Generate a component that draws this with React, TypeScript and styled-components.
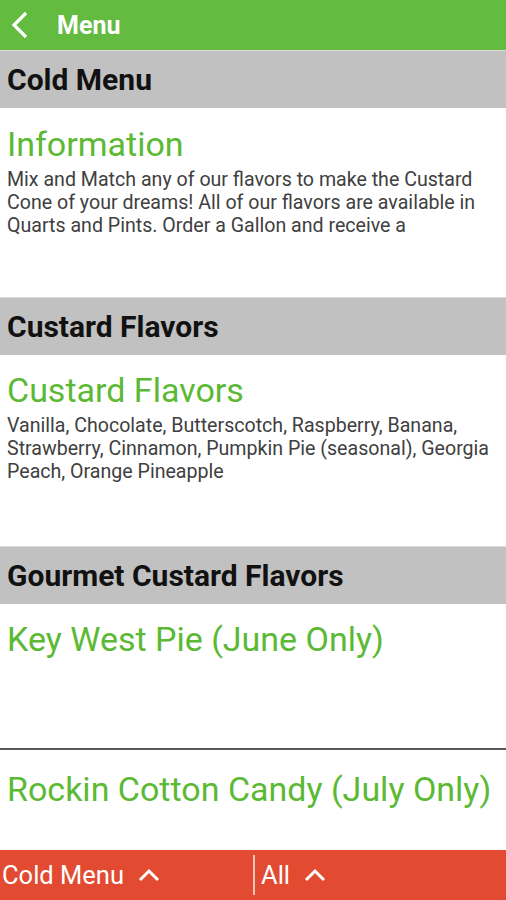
import styled, { createGlobalStyle } from "styled-components";

const GlobalStyle = createGlobalStyle`
  * { box-sizing: border-box; }
  body {
    margin: 0;
    font-family: Roboto, "Liberation Sans", sans-serif;
    background: #ffffff;
  }
`;

const Screen = styled.div`
  width: 506px;
  height: 900px;
  display: flex;
  flex-direction: column;
  overflow: hidden;
`;

const TopBar = styled.div`
  height: 50px;
  flex: 0 0 50px;
  background: #63bb40;
  display: flex;
  align-items: center;
  padding-left: 10px;
  gap: 27px;
`;

const TopTitle = styled.span`
  color: #ffffff;
  font-size: 25px;
  font-weight: 700;
`;

const CategoryHeader = styled.div`
  height: 58px;
  flex: 0 0 58px;
  background: #c1c1c1;
  border-top: 1px solid #dcdcdc;
  display: flex;
  align-items: center;
  padding-left: 7px;
  font-size: 30px;
  font-weight: 700;
  color: #111111;
`;

const Section = styled.div<{ $h: number; $pt?: number }>`
  height: ${(p) => p.$h}px;
  flex: 0 0 ${(p) => p.$h}px;
  padding: ${(p) => p.$pt ?? 17}px 6px 0 7px;
`;

const ItemTitle = styled.div`
  color: #5bb934;
  font-size: 34px;
  line-height: 38px;
`;

const ItemText = styled.div`
  margin-top: 5px;
  color: #404040;
  font-size: 19.6px;
  line-height: 23px;
`;

const Divider = styled.div`
  height: 2px;
  flex: 0 0 2px;
  background: #5a5a5a;
`;

const BottomBar = styled.div`
  margin-top: auto;
  height: 50px;
  flex: 0 0 50px;
  background: #e24b31;
  display: flex;
  align-items: center;
  color: #ffffff;
  font-size: 25.5px;
`;

const Tab = styled.div<{ $w?: number }>`
  width: ${(p) => (p.$w ? `${p.$w}px` : "auto")};
  display: flex;
  align-items: center;
  gap: 14px;
  padding-left: ${(p) => (p.$w ? 2 : 6)}px;
`;

const TabDivider = styled.div`
  width: 2px;
  height: 40px;
  background: #f3c3ba;
`;

const BackIcon = () => (
  <svg width="20" height="30" viewBox="0 0 20 30">
    <path d="M16 3 L4 15 L16 27" fill="none" stroke="#fff" strokeWidth="3.2" />
  </svg>
);

const UpIcon = () => (
  <svg width="22" height="14" viewBox="0 0 22 14">
    <path d="M2 12 L11 3 L20 12" fill="none" stroke="#fff" strokeWidth="3" />
  </svg>
);

export default function App() {
  return (
    <Screen>
      <GlobalStyle />
      <TopBar>
        <BackIcon />
        <TopTitle>Menu</TopTitle>
      </TopBar>

      <CategoryHeader>Cold Menu</CategoryHeader>
      <Section $h={189}>
        <ItemTitle>Information</ItemTitle>
        <ItemText>
          Mix and Match any of our flavors to make the Custard Cone of your
          dreams! All of our flavors are available in Quarts and Pints. Order a
          Gallon and receive a
        </ItemText>
      </Section>

      <CategoryHeader>Custard Flavors</CategoryHeader>
      <Section $h={191} $pt={16}>
        <ItemTitle>Custard Flavors</ItemTitle>
        <ItemText>
          Vanilla, Chocolate, Butterscotch, Raspberry, Banana, Strawberry,
          Cinnamon, Pumpkin Pie (seasonal), Georgia Peach, Orange Pineapple
        </ItemText>
      </Section>

      <CategoryHeader>Gourmet Custard Flavors</CategoryHeader>
      <Section $h={144} $pt={16}>
        <ItemTitle>Key West Pie (June Only)</ItemTitle>
      </Section>
      <Divider />
      <Section $h={99} $pt={20}>
        <ItemTitle>Rockin Cotton Candy (July Only)</ItemTitle>
      </Section>

      <BottomBar>
        <Tab $w={253}>
          Cold Menu
          <UpIcon />
        </Tab>
        <TabDivider />
        <Tab>
          All
          <UpIcon />
        </Tab>
      </BottomBar>
    </Screen>
  );
}
